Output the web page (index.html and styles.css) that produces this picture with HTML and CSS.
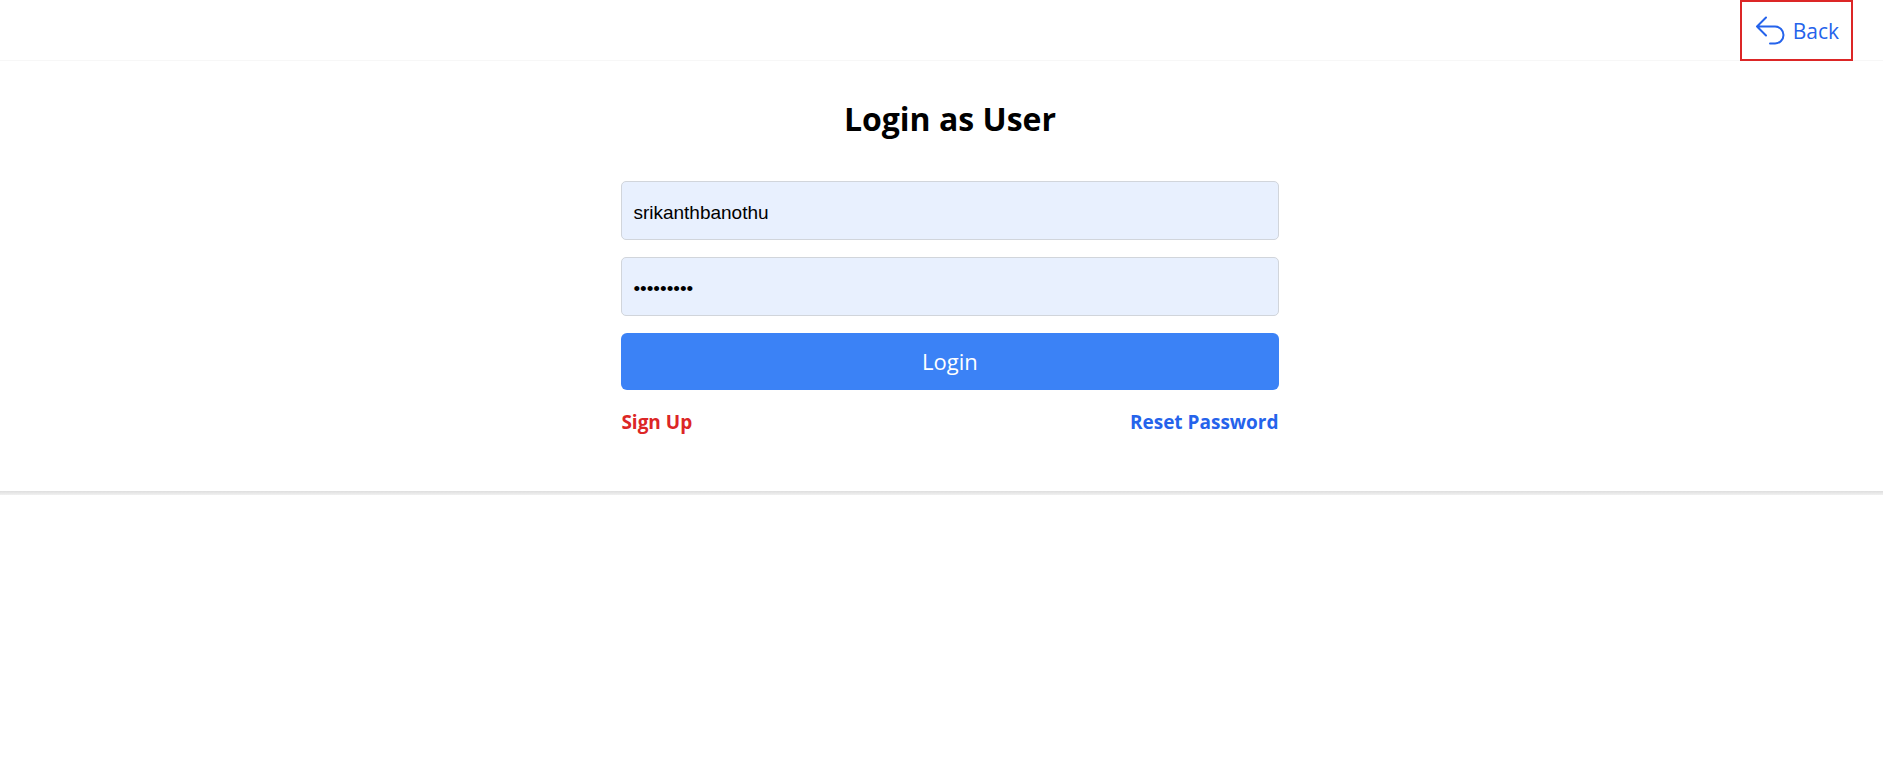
FILE: index.html
```html
<!DOCTYPE html>
<html lang="en">
<head>
<meta charset="utf-8">
<title>Login</title>
<link rel="stylesheet" href="styles.css">
</head>
<body>
<header class="topbar">
  <a class="back" href="#">
    <svg class="back-icon" viewBox="0 0 30 30" aria-hidden="true"><path d="M11 1.500 2 10.500l9 9M2 10.500h18a8.500 8.500 0 0 1 0 17h-5"/></svg>
    <span>Back</span>
  </a>
</header>
<main class="panel">
  <form class="login">
    <h1 class="title">Login as User</h1>
    <input class="field" type="text" aria-label="Username" value="srikanthbanothu">
    <input class="field" type="password" aria-label="Password" value="password1">
    <button class="submit" type="button">Login</button>
    <nav class="links">
      <a class="signup" href="#">Sign Up</a>
      <a class="reset" href="#">Reset Password</a>
    </nav>
  </form>
</main>
</body>
</html>
```
FILE: styles.css
```css
* { box-sizing: border-box; }
body {
  margin: 0;
  background: #fff;
  color: #000;
  font-family: "Segoe UI", "Open Sans", "Noto Sans", sans-serif;
}
a { text-decoration: none; }
.topbar {
  display: flex;
  justify-content: flex-end;
  height: 61px;
  padding-right: 30px;
  border-bottom: 1px solid #f7f7f7;
}
.back {
  display: flex;
  align-items: center;
  gap: 8px;
  height: 61px;
  padding: 0 12px 0 13px;
  border: 2px solid #dc2626;
  color: #2563eb;
  font-size: 21px;
}
.back-icon {
  width: 30px;
  height: 30px;
  fill: none;
  stroke: currentColor;
  stroke-width: 2;
  stroke-linecap: round;
  stroke-linejoin: round;
}
.panel::after {
  content: "";
  display: block;
  height: 4px;
  margin-top: 54px;
  background: linear-gradient(#dedede, #f1f1f1);
}
.login {
  display: flex;
  flex-direction: column;
  gap: 17px;
  width: 34.9%;
  margin-left: 33%;
}
.title {
  margin: 34px 0 22px;
  font-size: 32px;
  line-height: 47px;
  text-align: center;
}
.field {
  width: 100%;
  height: 59px;
  padding: 5px 11px 0;
  border: 1px solid #d1d5db;
  border-radius: 5px;
  background: #e8f0fe;
  color: #000;
  font-family: Arial, "Liberation Sans", sans-serif;
  font-size: 19px;
}
.submit {
  height: 57px;
  padding: 0 0 2px;
  border: 0;
  border-radius: 6px;
  background: #3b82f6;
  color: #fff;
  font-family: inherit;
  font-size: 22px;
}
.links {
  display: flex;
  justify-content: space-between;
  font-size: 19px;
  font-weight: 700;
  line-height: 30px;
}
.signup { color: #dc2626; }
.reset { color: #2563eb; }
```
